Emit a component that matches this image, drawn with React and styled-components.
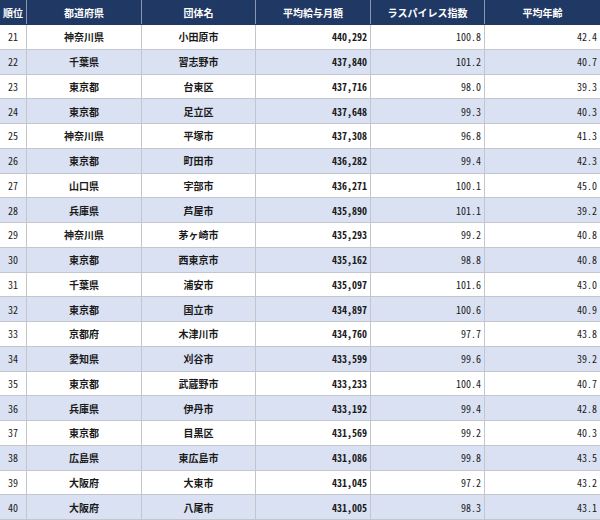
import React from "react";
import styled, { createGlobalStyle } from "styled-components";

const rows = [
  [21, "神奈川県", "小田原市", "440,292", "100.8", "42.4"],
  [22, "千葉県", "習志野市", "437,840", "101.2", "40.7"],
  [23, "東京都", "台東区", "437,716", "98.0", "39.3"],
  [24, "東京都", "足立区", "437,648", "99.3", "40.3"],
  [25, "神奈川県", "平塚市", "437,308", "96.8", "41.3"],
  [26, "東京都", "町田市", "436,282", "99.4", "42.3"],
  [27, "山口県", "宇部市", "436,271", "100.1", "45.0"],
  [28, "兵庫県", "芦屋市", "435,890", "101.1", "39.2"],
  [29, "神奈川県", "茅ヶ崎市", "435,293", "99.2", "40.8"],
  [30, "東京都", "西東京市", "435,162", "98.8", "40.8"],
  [31, "千葉県", "浦安市", "435,097", "101.6", "43.0"],
  [32, "東京都", "国立市", "434,897", "100.6", "40.9"],
  [33, "京都府", "木津川市", "434,760", "97.7", "43.8"],
  [34, "愛知県", "刈谷市", "433,599", "99.6", "39.2"],
  [35, "東京都", "武蔵野市", "433,233", "100.4", "40.7"],
  [36, "兵庫県", "伊丹市", "433,192", "99.4", "42.8"],
  [37, "東京都", "目黒区", "431,569", "99.2", "40.3"],
  [38, "広島県", "東広島市", "431,086", "99.8", "43.5"],
  [39, "大阪府", "大東市", "431,045", "97.2", "43.2"],
  [40, "大阪府", "八尾市", "431,005", "98.3", "43.1"],
];

const headers = ["順位", "都道府県", "団体名", "平均給与月額", "ラスパイレス指数", "平均年齢"];

const Global = createGlobalStyle`
  body {
    margin: 0;
    background: #fff;
    font-family: "Noto Sans CJK JP", "Noto Sans", sans-serif;
  }
`;

const Table = styled.div`
  width: 600px;
  height: 520px;
  display: grid;
  grid-template-rows: 25px repeat(20, 1fr);
  font-size: 10px;
  color: #1a1a1a;
  font-feature-settings: "hwid";
`;

const Row = styled.div`
  display: grid;
  grid-template-columns: 27px 115px 114px 115px 114px 115px;
  background: ${(p) => (p.$head ? "#203864" : p.$striped ? "#d9e1f2" : "#fff")};
  border-bottom: 1px solid ${(p) => (p.$head ? "#203864" : "#c3c6cc")};
`;

const HeadCell = styled.div`
  display: flex;
  align-items: center;
  justify-content: center;
  color: #fff;
  font-weight: 700;
  border-right: 1px solid #8a97ae;
  &:last-child {
    border-right: none;
  }
`;

const Cell = styled.div`
  display: flex;
  align-items: center;
  justify-content: ${(p) => (p.$right ? "flex-end" : "center")};
  padding-right: ${(p) => (p.$right ? "3px" : "0")};
  font-weight: ${(p) => (p.$bold ? 700 : 400)};
  border-right: 1px solid #c3c6cc;
  &:last-child {
    border-right: none;
  }
`;

export default function App() {
  return (
    <>
      <Global />
      <Table>
        <Row $head>
          {headers.map((h) => (
            <HeadCell key={h}>{h}</HeadCell>
          ))}
        </Row>
        {rows.map((r, i) => (
          <Row key={r[0]} $striped={i % 2 === 1}>
            <Cell>{r[0]}</Cell>
            <Cell $bold>{r[1]}</Cell>
            <Cell $bold>{r[2]}</Cell>
            <Cell $right $bold>{r[3]}</Cell>
            <Cell $right>{r[4]}</Cell>
            <Cell $right>{r[5]}</Cell>
          </Row>
        ))}
      </Table>
    </>
  );
}
